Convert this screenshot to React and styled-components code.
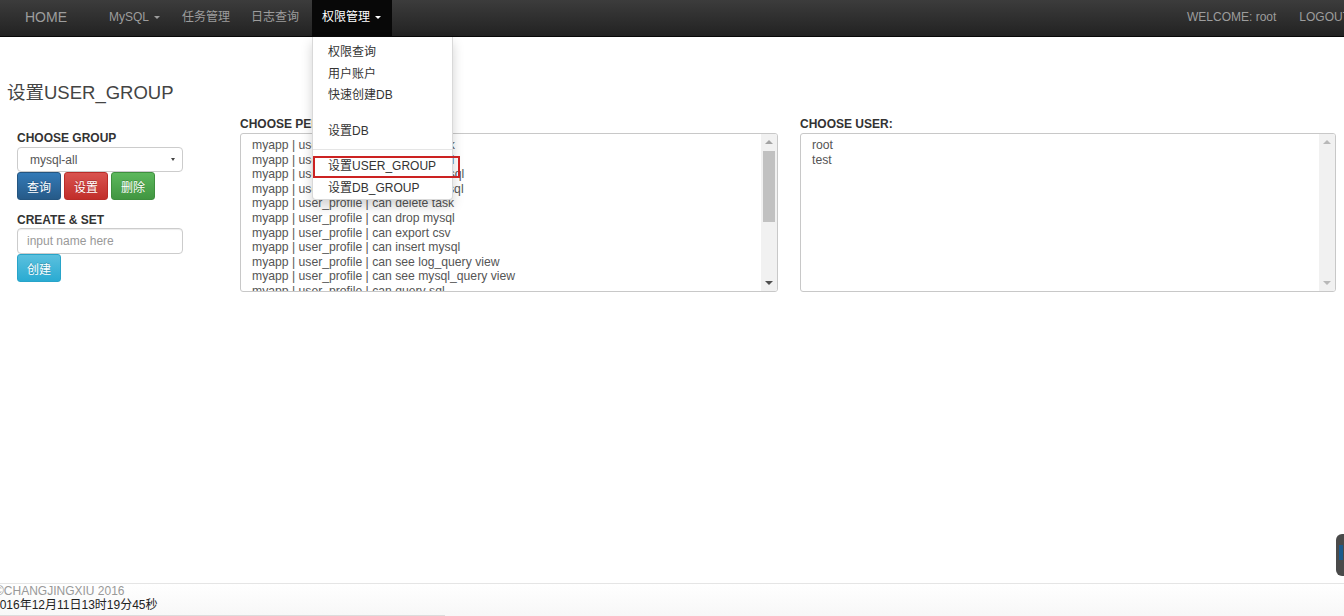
import React from 'react';
import styled, { createGlobalStyle } from 'styled-components';

const GlobalStyle = createGlobalStyle`
  html, body {
    margin: 0;
    padding: 0;
    overflow: hidden;
    background: #fff;
    font-family: "Liberation Sans", Arial, "Noto Sans CJK SC", sans-serif;
    font-size: 12px;
    color: #333;
  }
  * { box-sizing: border-box; }
`;

const permissions = [
  'can create task',
  'can alter mysql',
  'can create mysql',
  'can delete mysql',
  'can delete task',
  'can drop mysql',
  'can export csv',
  'can insert mysql',
  'can see log_query view',
  'can see mysql_query view',
  'can query sql',
];

const users = ['root', 'test'];

const App = () => {
  return (
    <Page>
      <GlobalStyle />
      <Navbar>
        <Brand>HOME</Brand>
        <NavList>
          <NavItem>MySQL<Caret /></NavItem>
          <NavItem>任务管理</NavItem>
          <NavItem>日志查询</NavItem>
          <NavItem active>
            权限管理<Caret />
            <DropMenu>
              <MenuItem>权限查询</MenuItem>
              <MenuItem>用户账户</MenuItem>
              <MenuItem>快速创建DB</MenuItem>
              <MenuGap />
              <MenuItem>设置DB</MenuItem>
              <Divider />
              <MenuItem highlighted>设置USER_GROUP</MenuItem>
              <MenuItem>设置DB_GROUP</MenuItem>
            </DropMenu>
          </NavItem>
        </NavList>
        <RightList>
          <NavItem>WELCOME: root</NavItem>
          <NavItem>LOGOUT</NavItem>
        </RightList>
      </Navbar>

      <Main>
        <Title>设置USER_GROUP</Title>
        <FormGrid>
          <LeftCol>
            <Label>CHOOSE GROUP</Label>
            <Select>
              <span>mysql-all</span>
              <SmallCaret />
            </Select>
            <ButtonRow>
              <Btn kind="primary">查询</Btn>
              <Btn kind="danger">设置</Btn>
              <Btn kind="success">删除</Btn>
            </ButtonRow>
            <Label spaced>CREATE &amp; SET</Label>
            <TextInput placeholder="input name here" />
            <ButtonRow>
              <Btn kind="info">创建</Btn>
            </ButtonRow>
          </LeftCol>

          <Field>
            <Label>CHOOSE PERMISSION:</Label>
            <ListBox>
              <ListItems>
                {permissions.map((p) => (
                  <ListLine key={p}>myapp | user_profile | {p}</ListLine>
                ))}
              </ListItems>
              <ScrollBar>
                <Arrow up />
                <Track>
                  <Thumb />
                </Track>
                <Arrow />
              </ScrollBar>
            </ListBox>
          </Field>

          <Field>
            <Label>CHOOSE USER:</Label>
            <ListBox>
              <ListItems>
                {users.map((u) => (
                  <ListLine key={u}>{u}</ListLine>
                ))}
              </ListItems>
              <ScrollBar>
                <Arrow up muted />
                <Track />
                <Arrow muted />
              </ScrollBar>
            </ListBox>
          </Field>
        </FormGrid>
      </Main>

      <Footer>
        <Copy>©CHANGJINGXIU 2016</Copy>
        <Clock>2016年12月11日13时19分45秒</Clock>
        <BottomBar />
      </Footer>

      <SideWidget>
        <SideWidgetMark />
      </SideWidget>
    </Page>
  );
};

export default App;

const Page = styled.div`
  position: relative;
  height: 616px;
  display: flex;
  flex-direction: column;
`;

const Navbar = styled.div`
  height: 37px;
  display: flex;
  align-items: stretch;
  background: linear-gradient(to bottom, #3c3c3c 0%, #222 100%);
  border-bottom: 1px solid #080808;
  position: relative;
  z-index: 10;
`;

const Brand = styled.div`
  color: #9d9d9d;
  font-size: 14px;
  padding: 10px 0 0 25px;
  width: 99px;
  line-height: 15px;
`;

const NavList = styled.div`
  display: flex;
  align-items: stretch;
`;

const RightList = styled.div`
  display: flex;
  align-items: stretch;
  margin-left: auto;
  margin-right: -17px;
  gap: 2px;
`;

const NavItem = styled.div`
  position: relative;
  color: ${(p) => (p.active ? '#fff' : '#9d9d9d')};
  background: ${(p) => (p.active ? '#080808' : 'transparent')};
  padding: 10px 10px 0;
  line-height: 15px;
  font-size: 12px;
  white-space: nowrap;
  margin-left: ${(p) => (p.active ? '2px' : '0')};
  margin-right: ${(p) => (p.active ? '0' : '1px')};
`;

const Caret = styled.span`
  display: inline-block;
  width: 0;
  height: 0;
  margin: 0 1px 0 5px;
  vertical-align: middle;
  border-top: 3px solid;
  border-left: 3px solid transparent;
  border-right: 3px solid transparent;
`;

const DropMenu = styled.div`
  position: absolute;
  top: 37px;
  left: 0;
  width: 141px;
  background: #fff;
  border: 1px solid rgba(0, 0, 0, 0.15);
  border-top: none;
  border-radius: 0 0 4px 4px;
  box-shadow: 0 6px 12px rgba(0, 0, 0, 0.175);
  padding: 5px 0 0;
`;

const MenuItem = styled.div`
  position: relative;
  color: #333;
  font-size: 12px;
  line-height: 21.5px;
  padding: 0 15px;
  white-space: nowrap;
  &::after {
    content: '';
    display: ${(p) => (p.highlighted ? 'block' : 'none')};
    position: absolute;
    left: 0;
    right: -8px;
    top: 0;
    bottom: 0;
    border: 2px solid #cc2222;
  }
`;

const MenuGap = styled.div`
  height: 14px;
`;

const Divider = styled.div`
  height: 1px;
  margin: 7px 0 6px;
  background: #e5e5e5;
`;

const Main = styled.div`
  flex: 1;
  padding: 46px 8px 0 0;
`;

const Title = styled.div`
  font-size: 18.5px;
  line-height: 20px;
  color: #444;
  padding-left: 7px;
`;

const FormGrid = styled.div`
  display: grid;
  grid-template-columns: 201px 538px 536px;
  column-gap: 22px;
  padding-left: 17px;
  margin-top: 14px;
  align-items: start;
`;

const LeftCol = styled.div`
  padding-top: 14px;
  display: flex;
  flex-direction: column;
  align-items: flex-start;
`;

const Field = styled.div`
  display: flex;
  flex-direction: column;
`;

const Label = styled.div`
  font-weight: bold;
  font-size: 12px;
  line-height: 14px;
  color: #333;
  margin-top: ${(p) => (p.spaced ? '13px' : '0')};
  margin-bottom: 1px;
`;

const Select = styled.div`
  width: 166px;
  height: 25px;
  border: 1px solid #ccc;
  border-radius: 4px;
  display: flex;
  align-items: center;
  justify-content: space-between;
  padding: 0 7px 0 12px;
  color: #555;
  font-size: 12px;
  margin-top: 1px;
`;

const SmallCaret = styled.span`
  width: 0;
  height: 0;
  border-top: 3px solid #444;
  border-left: 2.5px solid transparent;
  border-right: 2.5px solid transparent;
`;

const ButtonRow = styled.div`
  display: flex;
  gap: 3px;
`;

const palette = {
  primary: ['#337ab7', '#265a88', '#245580'],
  danger: ['#d9534f', '#c12e2a', '#b92c28'],
  success: ['#5cb85c', '#419641', '#3e8f3e'],
  info: ['#5bc0de', '#2aabd2', '#28a4c9'],
};

const Btn = styled.div`
  width: 44px;
  height: 28px;
  display: flex;
  align-items: center;
  justify-content: center;
  color: #fff;
  font-size: 12px;
  border-radius: 3px;
  background: linear-gradient(
    to bottom,
    ${(p) => palette[p.kind][0]} 0%,
    ${(p) => palette[p.kind][1]} 100%
  );
  border: 1px solid ${(p) => palette[p.kind][2]};
  text-shadow: 0 -1px 0 rgba(0, 0, 0, 0.2);
`;

const TextInput = styled.input`
  width: 166px;
  height: 26px;
  border: 1px solid #ccc;
  border-radius: 4px;
  padding: 0 9px;
  font-family: inherit;
  font-size: 12px;
  color: #555;
  outline: none;
  box-shadow: inset 0 1px 1px rgba(0, 0, 0, 0.075);
  &::placeholder {
    color: #999;
  }
`;

const ListBox = styled.div`
  height: 159px;
  border: 1px solid #c8c8c8;
  border-radius: 3px;
  display: flex;
  overflow: hidden;
  margin-top: 1px;
`;

const ListItems = styled.div`
  flex: 1;
  padding: 4px 0 0 11px;
  overflow: hidden;
`;

const ListLine = styled.div`
  line-height: 14.6px;
  font-size: 12.2px;
  color: #555;
  white-space: nowrap;
`;

const ScrollBar = styled.div`
  width: 16px;
  background: #f1f1f1;
  display: flex;
  flex-direction: column;
  align-items: center;
`;

const Arrow = styled.div`
  height: 16px;
  width: 16px;
  display: flex;
  align-items: center;
  justify-content: center;
  &::before {
    content: '';
    width: 0;
    height: 0;
    border-left: 4px solid transparent;
    border-right: 4px solid transparent;
    ${(p) =>
      p.up
        ? `border-bottom: 4px solid ${p.muted ? '#b8b8b8' : '#a3a3a3'};`
        : `border-top: 4px solid ${p.muted ? '#b8b8b8' : '#505050'};`}
  }
`;

const Track = styled.div`
  flex: 1;
  width: 100%;
  padding: 0 2px;
`;

const Thumb = styled.div`
  height: 71px;
  margin-top: 1px;
  background: #c1c1c1;
`;

const Footer = styled.div`
  border-top: 1px solid #e5e5e5;
  background: linear-gradient(to bottom, #fff 0%, #f7f7f7 100%);
  height: 33px;
  position: relative;
`;

const Copy = styled.div`
  color: #999;
  font-size: 12px;
  line-height: 14px;
  margin-left: -5px;
`;

const Clock = styled.div`
  color: #222;
  font-size: 12px;
  line-height: 15px;
  margin-left: -7px;
`;

const BottomBar = styled.div`
  width: 445px;
  height: 2px;
  margin-top: 2px;
  background: #dcdcdc;
`;

const SideWidget = styled.div`
  position: absolute;
  left: 1336px;
  top: 534px;
  width: 20px;
  height: 42px;
  border-radius: 6px;
  background: #4a4a4a;
  padding: 11px 0 0 3px;
`;

const SideWidgetMark = styled.div`
  width: 4px;
  height: 15px;
  background: #1d5a8c;
`;
